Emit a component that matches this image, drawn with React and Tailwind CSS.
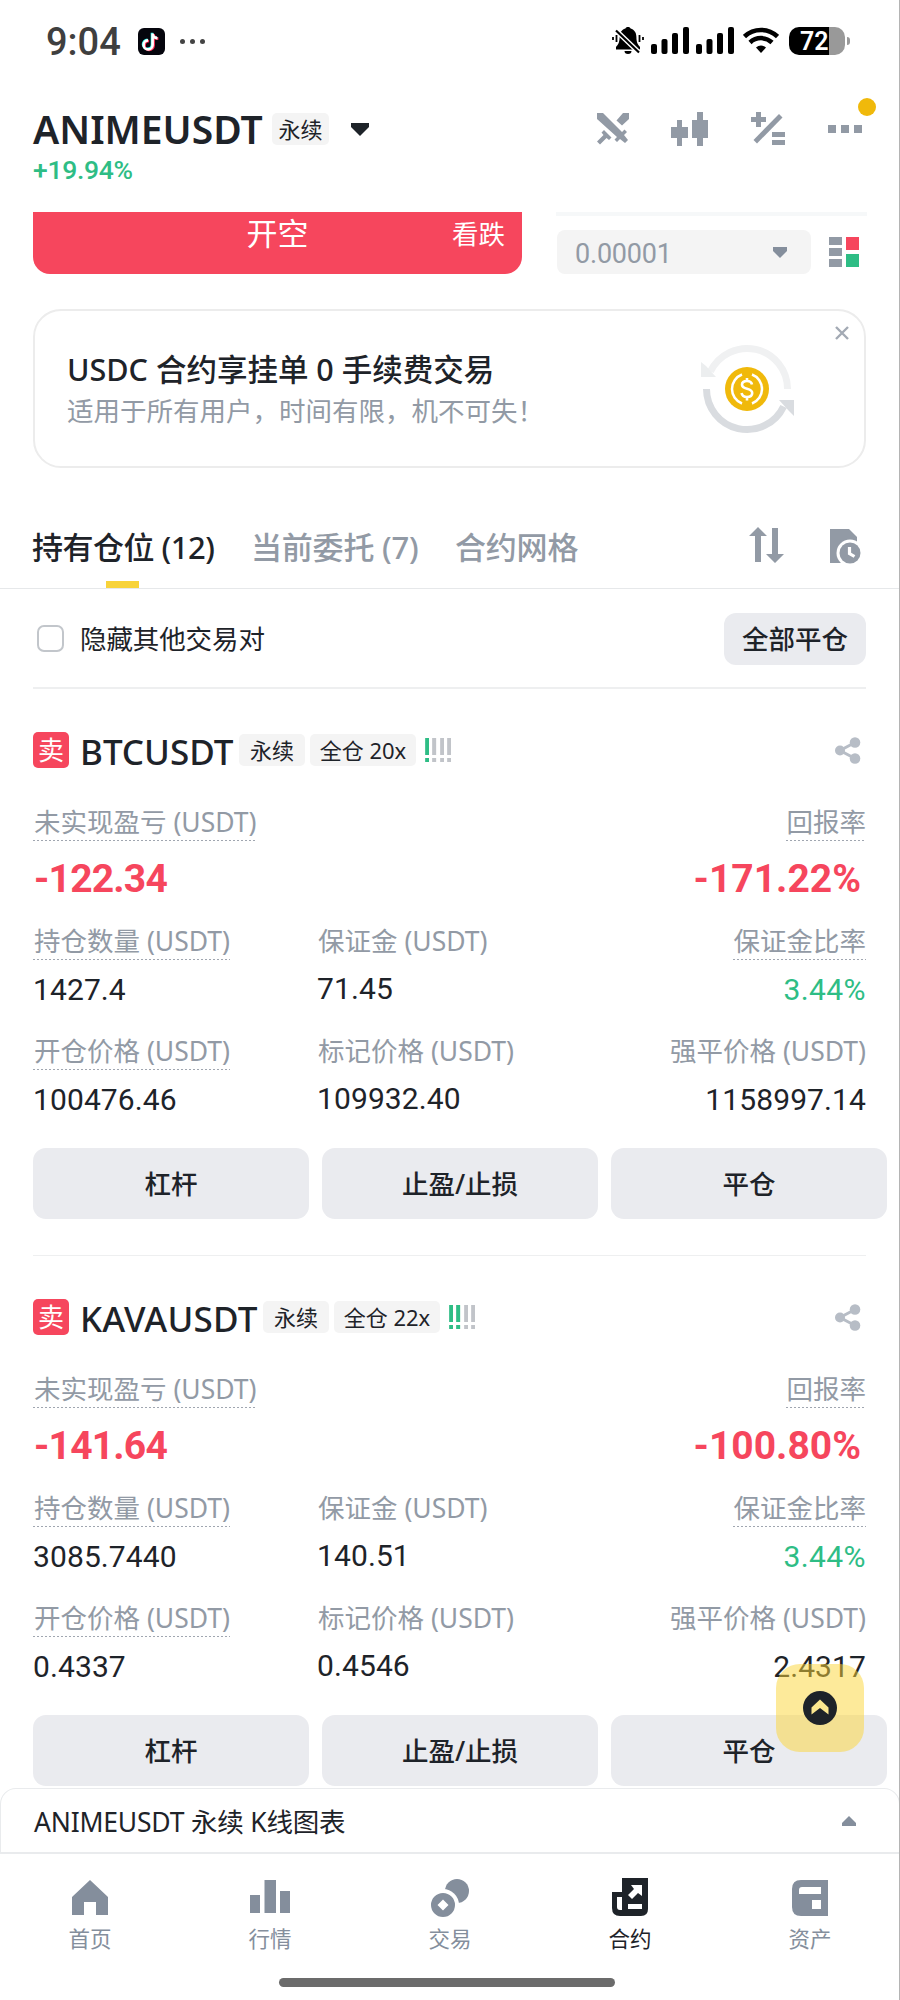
import clsx from 'clsx';

const positions = [
  {
    symbol: 'BTCUSDT',
    symbolClass: 'w-[157px] tracking-[0px]',
    leverage: '全仓 20x',
    risk: 1,
    pnl: '-122.34',
    roi: '-171.22%',
    size: '1427.4',
    margin: '71.45',
    ratio: '3.44%',
    entry: '100476.46',
    mark: '109932.40',
    liq: '1158997.14',
  },
  {
    symbol: 'KAVAUSDT',
    symbolClass: 'w-[181px] tracking-[0.2px]',
    leverage: '全仓 22x',
    risk: 2,
    pnl: '-141.64',
    roi: '-100.80%',
    size: '3085.7440',
    margin: '140.51',
    ratio: '3.44%',
    entry: '0.4337',
    mark: '0.4546',
    liq: '2.4317',
  },
];

function StatusBar() {
  return (
    <div className="flex h-20 shrink-0 items-start pl-[46px] pr-[50px] pt-[27px]">
      <span className="w-[92px] font-['Roboto'] text-[38px] leading-[30px] font-medium text-[#3f3f3f]">9:04</span>
      <svg width="27" height="27" viewBox="0 0 27 27" className="mt-px">
        <rect width="27" height="27" rx="6" fill="#05050d" />
        <g fill="none" strokeWidth="2.6">
          <path d="M14.6 5v11.500a4.500 4.500 0 1 1-4.500-4.500M14.600 5.500c.3 2.700 2 4 4.800 4.300" stroke="#25f4ee" transform="translate(-.6 -.2)" />
          <path d="M14.600 5v11.500a4.500 4.500 0 1 1-4.500-4.500M14.600 5.500c.3 2.700 2 4 4.800 4.300" stroke="#fe2c55" transform="translate(1 1)" />
          <path d="M14.600 5v11.500a4.500 4.500 0 1 1-4.500-4.500M14.600 5.500c.3 2.700 2 4 4.800 4.300" stroke="#fff" transform="translate(0 .4)" />
        </g>
      </svg>
      <div className="ml-[15px] mt-[12px] flex gap-[5px]">
        <i className="size-[5px] rounded-full bg-[#444]" />
        <i className="size-[5px] rounded-full bg-[#444]" />
        <i className="size-[5px] rounded-full bg-[#444]" />
      </div>
      <div className="ml-auto flex items-start">
        <svg width="32" height="28" viewBox="0 0 32 28">
          <path d="M16 0c1.500 0 2.300.6 2.600 1.600 4 1.400 5.800 4.400 5.800 8.400 0 5.500 1.500 7.500 3.600 10v2.500H4V20c2.100-2.500 3.600-4.500 3.600-10 0-4 1.800-7 5.800-8.400C13.700.6 14.500 0 16 0z" />
          <path d="M12.500 24h7a3.500 3 0 0 1-7 0z" />
          <path d="M2.500 2l25 24" stroke="#fff" strokeWidth="5" />
          <path d="M4 3.500l23 22" stroke="#000" strokeWidth="2.200" />
          <path d="M1 10v3M4.500 8v7M27.500 8v7M31 10v3" stroke="#000" strokeWidth="1.800" />
        </svg>
        <Signal className="ml-[7px]" />
        <Signal className="ml-[7px]" />
        <svg width="36" height="27" viewBox="0 0 36 27" className="ml-[9px]">
          <path d="M1.500 9.500a24 24 0 0 1 33 0M7 15.500a16 16 0 0 1 22 0" fill="none" stroke="#000" strokeWidth="4.500" />
          <path d="M18 26l-5-5.500a7.500 7.500 0 0 1 10 0z" />
        </svg>
        <div className="ml-[10px] h-7 w-[56px] rounded-[10px] bg-[linear-gradient(90deg,#000_40px,#999_40px)] pl-[11px] font-['Roboto'] text-[25px] leading-[29px] font-semibold text-white">
          72
        </div>
        <i className="ml-[2px] mt-[10px] h-[8px] w-[3px] rounded-r-full bg-[#999]" />
      </div>
    </div>
  );
}

function Signal({ className }) {
  return (
    <svg width="38" height="27" viewBox="0 0 38 27" className={className}>
      <rect x="0" y="17" width="6" height="10" rx="2" />
      <rect x="10.500" y="12" width="6" height="15" rx="2" />
      <rect x="21" y="6" width="6" height="21" rx="2" />
      <rect x="32" y="0" width="6" height="27" rx="2" />
    </svg>
  );
}

function Tag({ children, className }) {
  return (
    <span className={clsx('flex h-8 items-center justify-center rounded-[5px] bg-[#f4f4f4] text-[22px] leading-8 text-[#1e2329]', className)}>
      {children}
    </span>
  );
}

function Header() {
  return (
    <header className="flex h-[132px] shrink-0 justify-between pl-[33px] pr-[30px]">
      <div className="pt-[27px]">
        <div className="flex h-[44px] items-center">
          <h1 className="w-[239px] text-[39px] leading-[44px] font-semibold text-[#1e2329]">ANIMEUSDT</h1>
          <Tag className="w-[57px]">永续</Tag>
          <svg width="18" height="13" viewBox="0 0 18 13" className="ml-[22px]" fill="#1e2329">
            <path d="M0 0h18v4L9 13 0 4z" />
          </svg>
        </div>
        <p className="mt-[5px] font-['Roboto'] text-[26.500px] leading-[28px] font-medium tracking-[-0.300px] text-[#2ebd85]">+19.94%</p>
      </div>
      <div className="relative mt-8 flex h-[35px] items-start text-[#929aa5]">
        <svg width="34" height="34" viewBox="0 0 34 34" className="mr-[41px]" fill="currentColor">
          <path d="M1 1h6l19 19 2.500-2.500 2.500 2.500-3 3 4 5-3 3-5-4-3 3-2.500-2.500L21 25 1 7z" />
          <path d="M33 1v6l-7 6.500-5.500-5L27 1zM8 18l7.500 7.500-2.500 2.500-2.500-2L4 32.500 1 29.500 7.500 23 5.500 20.500z" />
        </svg>
        <svg width="37" height="34" viewBox="0 0 37 34" className="mr-[43px]" fill="currentColor">
          <path d="M6 8h5v7h6v11h-6v8H6v-8H0V15h6zM26 0h6v8h5v18h-5v8h-6v-8h-5V8h5z" />
        </svg>
        <svg width="34" height="34" viewBox="0 0 34 34" className="mr-[43px]" fill="currentColor">
          <path d="M5 0h5v5h5v5h-5v5H5v-5H0V5h5zM21 20h13v5H21zM21 28h13v5H21z" />
          <path d="M28 2l3.500 3.500L6 31.500 2.500 28z" />
        </svg>
        <svg width="34" height="8" viewBox="0 0 34 8" className="mr-[8px] mt-[13px]" fill="currentColor">
          <path d="M0 0h8v8H0zM13 0h8v8h-8zM26 0h8v8h-8z" />
        </svg>
        <i className="absolute -right-[6px] -top-[14px] size-[18px] rounded-full bg-[#f0b90b]" />
      </div>
    </header>
  );
}

function OrderStrip() {
  return (
    <div className="flex h-[97px] shrink-0 pl-[33px] pr-[33px]">
      <button className="grid h-[62px] w-[489px] shrink-0 grid-cols-[1fr_auto_1fr] rounded-b-[17px] bg-[#f6465d] pl-[17px] pr-[17px] text-white">
        <span />
        <span className="text-[31px] leading-[43px]">开空</span>
        <span className="text-right text-[26.500px] leading-[45px]">看跌</span>
      </button>
      <div className="ml-[34px] w-[311px] border-t-4 border-[#f6f8f9]">
        <div className="mt-[14px] flex items-center pl-px">
          <div className="flex h-[44px] w-[254px] items-center justify-between rounded-lg bg-[#f4f4f4] pl-[18px] pr-[24px]">
            <span className="pt-[4px] font-['Roboto'] text-[27px] tracking-[-0.2px] text-[#929aa5]">0.00001</span>
            <svg width="14" height="11" viewBox="0 0 14 11" fill="#848e9c">
              <path d="M0 0h14v4L7 11 0 4z" />
            </svg>
          </div>
          <svg width="30" height="30" viewBox="0 0 30 30" className="ml-[18px]">
            <path d="M0 0h13v8H0zM0 11h13v8H0zM0 22h13v8H0z" fill="#929aa5" />
            <path d="M17 0h13v13H17z" fill="#f6465d" />
            <path d="M17 17h13v13H17z" fill="#2ebd85" />
          </svg>
        </div>
      </div>
    </div>
  );
}

function Banner() {
  return (
    <section className="relative ml-[33px] mr-[34px] flex h-[159px] shrink-0 items-center justify-between rounded-[28px] border-2 border-[#ececec] pl-[32px] pr-[70px]">
      <div>
        <h2 className="pt-px text-[30.500px] leading-[43px] font-medium text-[#1e2329]">USDC 合约享挂单 0 手续费交易</h2>
        <p className="pt-px text-[26.500px] leading-[38px] text-[#929aa5]">适用于所有用户，时间有限，机不可失！</p>
      </div>
      <svg width="94" height="90" viewBox="0 0 94 90">
        <path d="M87.500 45A40.500 40.500 0 0 0 10.400 27.600" fill="none" stroke="#f0f1f2" strokeWidth="7" />
        <path d="M1 18l5 4 10 11H1z" fill="#eceeef" />
        <path d="M6.500 45A40.500 40.500 0 0 0 83.600 62.400" fill="none" stroke="#d9dce0" strokeWidth="7" />
        <path d="M79 56h15v16l-5-5z" fill="#d9dce0" />
        <circle cx="47" cy="45" r="22" fill="#f0b90b" />
        <path d="M42 30.500a15.500 15.500 0 0 0 0 29M52 30.500a15.500 15.500 0 0 1 0 29" fill="none" stroke="#fff" strokeWidth="2.500" />
        <path d="M52 40.500c-.5-2.500-2.500-3.500-5-3.500-3 0-5 1.400-5 3.800 0 5.400 10.200 2.600 10.200 8.200 0 2.500-2.200 4-5.200 4-2.800 0-5-1.300-5.400-4M47 34v3M47 53v3.500" fill="none" stroke="#fff" strokeWidth="2.600" />
      </svg>
      <svg width="14" height="14" viewBox="0 0 14 14" className="absolute right-[15px] top-[15px]">
        <path d="M1 1l12 12M13 1L1 13" stroke="#a3aab4" strokeWidth="2.400" />
      </svg>
    </section>
  );
}

function Tabs() {
  return (
    <nav className="flex h-[121px] shrink-0 items-end border-b border-[#e6e8ea] pl-[32px] pr-[39px] text-[31px] leading-[44px] font-medium text-[#929aa5]">
      <div className="flex w-[219px] flex-col text-[#1e2329]">
        <span className="whitespace-nowrap tracking-[-0.5px]">持有仓位 (12)</span>
        <i className="ml-[74px] mt-[12px] h-[7px] w-[33px] bg-[#f8d33a]" />
      </div>
      <span className="mb-[19px] w-[204px] whitespace-nowrap tracking-[-0.200px]">当前委托 (7)</span>
      <span className="mb-[19px] tracking-[-0.200px]">合约网格</span>
      <svg width="35" height="36" viewBox="0 0 35 36" className="mb-[25px] ml-auto" fill="currentColor">
        <path d="M9 0l9 9h-6v26H6V9H0zM23 1h6v26h6l-9 9-9-9h6z" />
      </svg>
      <svg width="31" height="35" viewBox="0 0 31 35" className="mb-[24px] ml-[46px]" fill="currentColor">
        <path d="M0 0h19l8 8v5H0zM0 13h20v21H0z" />
        <circle cx="20" cy="24" r="13.500" fill="#fff" />
        <circle cx="20" cy="24" r="10.500" />
        <path d="M19.500 18v6.500l5 3" fill="none" stroke="#fff" strokeWidth="3.200" />
      </svg>
    </nav>
  );
}

function FilterRow() {
  return (
    <div className="ml-[33px] mr-[34px] flex h-[100px] shrink-0 items-center border-b-2 border-[#eeeff0] pl-[4px] pt-px">
      <i className="size-[27px] rounded-[7px] border-2 border-[#c2c6cb]" />
      <span className="ml-[16px] pt-px text-[26.500px] leading-[40px] tracking-[-0.100px] text-[#1e2329]">隐藏其他交易对</span>
      <button className="ml-auto h-[52px] w-[142px] rounded-xl bg-[#eaebef] pt-px text-[26.500px] leading-[51px] font-medium text-[#1e2329]">全部平仓</button>
    </div>
  );
}

function Risk({ level }) {
  return (
    <div className="ml-[9px] flex gap-[3px]">
      {[0, 1, 2, 3].map((i) => (
        <svg key={i} width="4.300" height="24" viewBox="0 0 4 24" className={i < level ? 'text-[#2ebd85]' : 'text-[#c1c4c9]'} fill="currentColor">
          <path d="M0 0h4v17H0zM0 20h4v4H0z" />
        </svg>
      ))}
    </div>
  );
}

function Label({ children, dotted }) {
  return (
    <span
      className={clsx(
        'inline-block h-[37px] pl-px text-[26.500px] leading-[37px] text-[#929aa5]',
        dotted && 'bg-[repeating-linear-gradient(90deg,#a0a6b0_0_2px,transparent_2px_4px)] bg-[length:100%_1px] bg-bottom bg-no-repeat'
      )}
    >
      {children}
    </span>
  );
}

function Value({ children, className }) {
  return <p className={clsx("mt-[11px] font-['Roboto'] text-[30px] leading-[37px]", className || 'tracking-[0.1px]')}>{children}</p>;
}

function Position({ p }) {
  return (
    <article className="flex h-[567px] shrink-0 flex-col pl-[33px] pr-[34px] pt-[39px] text-[#1e2329]">
      <div className="flex h-[44px] items-center">
        <span className="size-9 rounded-[5px] bg-[#f6465d] text-center text-[26px] leading-9 text-white">卖</span>
        <span className={clsx('ml-[10px] pl-px pt-[4px] text-[35px] leading-[40px] font-medium', p.symbolClass)}>{p.symbol}</span>
        <Tag className="ml-[3px] w-[66px]">永续</Tag>
        <Tag className="ml-[5px] w-[106px]">{p.leverage}</Tag>
        <Risk level={p.risk} />
        <svg width="26" height="27" viewBox="0 0 26 27" className="ml-auto mr-[5px]" fill="#b7bdc6">
          <circle cx="5" cy="13.500" r="5" />
          <circle cx="20" cy="5.500" r="5.300" />
          <circle cx="20" cy="21.500" r="5.300" />
          <path d="M20 5.500L5 13.500l15 8" fill="none" stroke="#b7bdc6" strokeWidth="3" />
        </svg>
      </div>

      <div className="mt-8 flex justify-between">
        <Label dotted>未实现盈亏 (USDT)</Label>
        <Label dotted>回报率</Label>
      </div>
      <div className="mt-[17px] flex h-10 justify-between pr-[5px] font-['Roboto'] text-[39px] leading-[42px] font-bold text-[#f6465d]">
        <span className="pl-px tracking-[-0.800px]">{p.pnl}</span>
        <span>{p.roi}</span>
      </div>

      <div className="mt-[25px] grid grid-cols-[284px_1fr_auto]">
        <div>
          <Label dotted>持仓数量 (USDT)</Label>
          <Value>{p.size}</Value>
        </div>
        <div>
          <Label>保证金 (USDT)</Label>
          <Value className="-translate-y-px tracking-[0.1px]">{p.margin}</Value>
        </div>
        <div className="text-right">
          <Label dotted>保证金比率</Label>
          <Value className="tracking-[0.4px] text-[#2ebd85]">{p.ratio}</Value>
        </div>
      </div>
      <div className="mt-[25px] grid grid-cols-[284px_1fr_auto]">
        <div>
          <Label dotted>开仓价格 (USDT)</Label>
          <Value>{p.entry}</Value>
        </div>
        <div>
          <Label>标记价格 (USDT)</Label>
          <Value className="-translate-y-px tracking-[0.1px]">{p.mark}</Value>
        </div>
        <div className="text-right">
          <Label>强平价格 (USDT)</Label>
          <Value>{p.liq}</Value>
        </div>
      </div>

      <div className="-mr-[21px] mt-[30px] grid grid-cols-3 gap-[13px] text-[26.500px] font-medium">
        <button className="h-[71px] rounded-[13px] bg-[#eaebef] pt-[2px]">杠杆</button>
        <button className="h-[71px] rounded-[13px] bg-[#eaebef] pt-[2px]">止盈/止损</button>
        <button className="h-[71px] rounded-[13px] bg-[#eaebef] pt-[2px]">平仓</button>
      </div>
      <div className="mt-auto h-px bg-[#eeeff0]" />
    </article>
  );
}

const navItems = [
  {
    label: '首页',
    icon: <path d="M18 0l18 17v18H24V22H12v13H0V17z" />,
  },
  {
    label: '行情',
    icon: <path d="M-2 15H8v18H-2zM12.500 0H24v33H12.500zM28 11h10v22H28z" />,
  },
  {
    label: '交易',
    icon: (
      <>
        <circle cx="25" cy="11" r="12" />
        <circle cx="11" cy="25" r="16" fill="#fff" />
        <path d="M11 13a12 12 0 1 1 0 24 12 12 0 0 1 0-24zm0 6.500L5.500 25l5.500 5.500 5.500-5.500z" fillRule="evenodd" />
      </>
    ),
  },
  {
    label: '合约',
    active: true,
    icon: (
      <>
        <path d="M10-2h26v31q0 7-7 7H8q-8 0-8-8V12h10z" />
        <path d="M19 5h11v11l-4-3-6 6-4-4 6-6zM5 17h5v13H8q-3 0-3-3zM16 24h14v5H16z" fill="#fff" />
      </>
    ),
  },
  {
    label: '资产',
    icon: (
      <>
        <path d="M9 0h27v36H9q-9 0-9-9V9q0-9 9-9z" />
        <path d="M10 7h19v7H7v-4q0-3 3-3zM20 20h9v9h-9z" fill="#fff" />
      </>
    ),
  },
];

function BottomBar() {
  return (
    <div className="absolute inset-x-0 bottom-0 h-[212px] bg-white">
      <div className="flex h-[66px] items-center justify-between rounded-t-[16px] border-x border-t border-b-2 border-[#e9ebed] pl-[33px] pr-[43px]">
        <span className="pt-[4px] text-[26.500px] tracking-[-0.2px] text-[#1e2329]">ANIMEUSDT 永续 K线图表</span>
        <svg width="14" height="10" viewBox="0 0 14 10" fill="#848e9c">
          <path d="M7 0l7 7v3H0V7z" />
        </svg>
      </div>
      <div className="grid h-[124px] grid-cols-5 pt-[26px]">
        {navItems.map((item) => (
          <div key={item.label} className={clsx('flex flex-col items-center', item.active ? 'text-[#1e2329]' : 'text-[#848e9c]')}>
            <svg width="36" height="36" viewBox="0 0 36 36" className="overflow-visible" fill="currentColor">
              {item.icon}
            </svg>
            <span className="mt-[7px] text-[21.500px] leading-[32px]">{item.label}</span>
          </div>
        ))}
      </div>
      <div className="ml-[279px] h-[9px] w-[336px] rounded-full bg-[#6b6b6b]" />
    </div>
  );
}

export default function App() {
  return (
    <main className="relative flex h-[2000px] w-[900px] flex-col overflow-hidden bg-white font-['Noto_Sans','Noto_Sans_CJK_SC',sans-serif]">
      <StatusBar />
      <Header />
      <OrderStrip />
      <Banner />
      <Tabs />
      <FilterRow />
      {positions.map((p) => (
        <Position key={p.symbol} p={p} />
      ))}
      <button className="absolute left-[776px] top-[1664px] flex size-[88px] items-center justify-center rounded-[24px] bg-[#fcd535]/50">
        <svg width="34" height="34" viewBox="0 0 34 34">
          <circle cx="17" cy="17" r="17" fill="#1e2329" />
          <path d="M17 8.500l8.500 8v7L17 17l-8.500 6.500v-7z" fill="#fbe78f" />
        </svg>
      </button>
      <BottomBar />
      <i className="absolute inset-y-0 right-0 w-px bg-[#b4b4b4]" />
    </main>
  );
}
